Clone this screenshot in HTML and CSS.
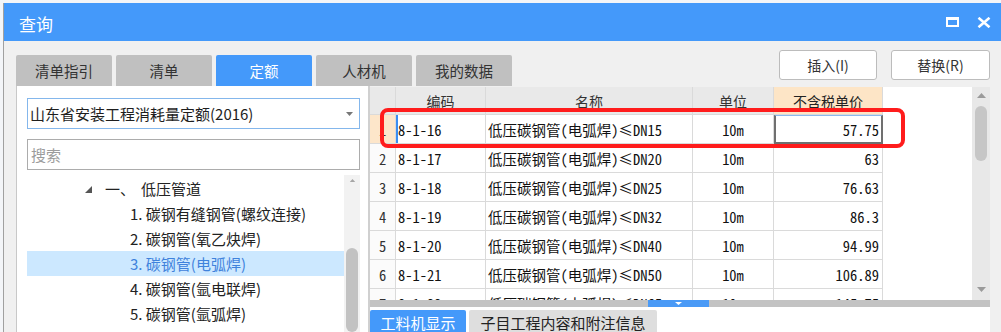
FILE: index.html
```html
<!DOCTYPE html>
<html lang="zh-CN">
<head>
<meta charset="utf-8">
<title>查询</title>
<link rel="stylesheet" href="styles.css">
</head>
<body>
<div class="dialog">
  <div class="titlebar">
    <span class="title">查询</span>
    <div class="win-ctrls">
      <svg class="ico" width="13" height="10" viewBox="0 0 13 10"><rect x="1" y="1.5" width="11" height="7.5" fill="none" stroke="#fff" stroke-width="2"/><rect x="0" y="0" width="13" height="3" fill="#fff"/></svg>
      <svg class="ico" width="14" height="11" viewBox="0 0 14 11"><path d="M1.5 0.8L12.5 10.2M12.5 0.8L1.5 10.2" stroke="#fff" stroke-width="2.6" fill="none"/></svg>
    </div>
  </div>
  <div class="dlg-body">
    <div class="toolbar">
      <div class="tabs">
        <div class="tab">清单指引</div>
        <div class="tab">清单</div>
        <div class="tab active">定额</div>
        <div class="tab">人材机</div>
        <div class="tab">我的数据</div>
      </div>
      <div class="actions">
        <button class="btn">插入(I)</button>
        <button class="btn">替换(R)</button>
      </div>
    </div>
    <div class="main">
      <div class="left">
        <div class="combo">
          <span class="combo-text">山东省安装工程消耗量定额(2016)</span>
          <svg class="combo-arrow" width="7" height="4" viewBox="0 0 7 4"><path d="M0 0H7L3.5 4Z" fill="#777"/></svg>
        </div>
        <div class="search">搜索</div>
        <div class="tree">
          <div class="tree-rows">
            <div class="node root"><svg class="twist" width="7" height="7" viewBox="0 0 7 7"><path d="M7 0V7H0Z" fill="#555"/></svg><span class="num">一、</span><span class="lbl">低压管道</span></div>
            <div class="node item">1. 碳钢有缝钢管(螺纹连接)</div>
            <div class="node item">2. 碳钢管(氧乙炔焊)</div>
            <div class="node item sel">3. 碳钢管(电弧焊)</div>
            <div class="node item">4. 碳钢管(氩电联焊)</div>
            <div class="node item">5. 碳钢管(氩弧焊)</div>
            <div class="node item">6. 碳钢伸缩器制作安装</div>
          </div>
          <div class="tree-scroll">
            <svg class="sb-up" width="9" height="5" viewBox="0 0 9 5"><path d="M0 5H9L4.5 0Z" fill="#a6a6a6"/></svg>
            <div class="tree-thumb"></div>
          </div>
        </div>
      </div>
      <div class="right">
        <div class="grid-top">
          <div class="table">
            <div class="row head">
              <div class="c rn"></div>
              <div class="c code">编码</div>
              <div class="c name">名称</div>
              <div class="c unit">单位</div>
              <div class="c price hot">不含税单价</div>
            </div>
            <div class="row">
              <div class="c rn cur">1</div>
              <div class="c code mark">8-1-16</div>
              <div class="c name">低压碳钢管(电弧焊)≤DN15</div>
              <div class="c unit">10m</div>
              <div class="c price focus">57.75</div>
            </div>
            <div class="row">
              <div class="c rn">2</div>
              <div class="c code">8-1-17</div>
              <div class="c name">低压碳钢管(电弧焊)≤DN20</div>
              <div class="c unit">10m</div>
              <div class="c price">63</div>
            </div>
            <div class="row">
              <div class="c rn">3</div>
              <div class="c code">8-1-18</div>
              <div class="c name">低压碳钢管(电弧焊)≤DN25</div>
              <div class="c unit">10m</div>
              <div class="c price">76.63</div>
            </div>
            <div class="row">
              <div class="c rn">4</div>
              <div class="c code">8-1-19</div>
              <div class="c name">低压碳钢管(电弧焊)≤DN32</div>
              <div class="c unit">10m</div>
              <div class="c price">86.3</div>
            </div>
            <div class="row">
              <div class="c rn">5</div>
              <div class="c code">8-1-20</div>
              <div class="c name">低压碳钢管(电弧焊)≤DN40</div>
              <div class="c unit">10m</div>
              <div class="c price">94.99</div>
            </div>
            <div class="row">
              <div class="c rn">6</div>
              <div class="c code">8-1-21</div>
              <div class="c name">低压碳钢管(电弧焊)≤DN50</div>
              <div class="c unit">10m</div>
              <div class="c price">106.89</div>
            </div>
            <div class="row">
              <div class="c rn">7</div>
              <div class="c code">8-1-22</div>
              <div class="c name">低压碳钢管(电弧焊)≤DN65</div>
              <div class="c unit">10m</div>
              <div class="c price">145.75</div>
            </div>
          </div>
          <div class="vscroll">
            <svg class="sb-up" width="9" height="5" viewBox="0 0 9 5"><path d="M0 5H9L4.5 0Z" fill="#9a9a9a"/></svg>
            <div class="vthumb"></div>
            <svg class="sb-down" width="9" height="5" viewBox="0 0 9 5"><path d="M0 0H9L4.5 5Z" fill="#9a9a9a"/></svg>
          </div>
        </div>
        <div class="splitter">
          <div class="split-btn"><svg width="7" height="3" viewBox="0 0 7 3"><path d="M0 0H7L3.5 3Z" fill="#fff"/></svg></div>
        </div>
        <div class="bottom">
          <div class="btab active">工料机显示</div>
          <div class="btab">子目工程内容和附注信息</div>
        </div>
        <div class="hl-box"></div>
      </div>
    </div>
  </div>
</div>
</body>
</html>
```
FILE: styles.css
```css
* { box-sizing: border-box; }
html, body { margin: 0; padding: 0; }
body {
  width: 1001px;
  height: 332px;
  overflow: hidden;
  background: #f3f5f8;
  font-family: "Noto Sans CJK SC", "Microsoft YaHei", sans-serif;
}
.dialog {
  margin: 3px 0 0 3px;
  width: 998px;
  height: 329px;
  border-left: 1px solid #a0a0a0;
  background: #f0f0f0;
  display: flex;
  flex-direction: column;
  overflow: hidden;
}
.titlebar {
  height: 38px;
  flex: none;
  background: #4499fa;
  color: #fff;
  display: flex;
  align-items: center;
  padding: 0 10px 0 15px;
}
.title { flex: 1; font-size: 17px; line-height: 20px; padding-top: 3px; }
.win-ctrls { display: flex; align-items: center; gap: 18px; }
.ico { display: block; }

.dlg-body {
  flex: 1;
  min-height: 0;
  display: flex;
  flex-direction: column;
  padding: 0 11px 0 12px;
}
.toolbar {
  height: 45px;
  flex: none;
  display: flex;
  align-items: flex-end;
  justify-content: space-between;
}
.tabs { display: flex; gap: 4px; }
.tab {
  width: 96px;
  height: 31px;
  background: #c0c0c0;
  border-radius: 2px 2px 0 0;
  color: #333;
  font-size: 14.5px;
  display: flex;
  align-items: center;
  justify-content: center;
}
.tab.active { background: #4499fa; color: #fff; }
.actions { display: flex; gap: 14px; margin-bottom: 6px; }
.btn {
  width: 98px;
  height: 30px;
  background: #fff;
  border: 1px solid #bcbcbc;
  border-radius: 3px;
  color: #333;
  font-family: inherit;
  font-size: 14px;
  padding: 0;
}
.btn + .btn { width: 99px; }

.main { flex: 1; min-height: 0; display: flex; }
.left {
  width: 354px;
  flex: none;
  background: #fff;
  border-left: 1px solid #c8c8c8;
  border-right: 2px solid #d0d0d0;
  padding: 12px 8px 0 10px;
  display: flex;
  flex-direction: column;
}
.combo {
  height: 31px;
  flex: none;
  border: 1px solid #84b7ec;
  display: flex;
  align-items: center;
  padding: 0 6px 0 2px;
  font-size: 15px;
  color: #1e1e1e;
}
.combo-text { flex: 1; }
.search {
  margin-top: 10px;
  height: 31px;
  flex: none;
  border: 1px solid #acacac;
  padding-left: 3px;
  font-size: 15px;
  line-height: 29px;
  color: #9c9c9c;
}
.tree { margin-top: 5px; flex: 1; display: flex; min-height: 0; }
.tree-rows { flex: 1; padding-top: 1px; }
.node {
  height: 25px;
  display: flex;
  align-items: center;
  font-size: 15px;
  color: #222;
  white-space: nowrap;
}
.root { padding-left: 58px; }
.twist { display: block; margin-top: 1px; }
.num { margin-left: 13px; }
.lbl { margin-left: 6px; }
.item { padding-left: 103px; }
.item.sel { background: #cce8ff; color: #3f82dc; }
.tree-scroll {
  width: 16px;
  flex: none;
  background: #f2f2f2;
  display: flex;
  flex-direction: column;
  align-items: center;
}
.tree-scroll .sb-up { display: block; margin-top: 4px; }
.tree-thumb {
  margin-top: 66px;
  width: 12px;
  height: 120px;
  border-radius: 6px;
  background: #c2c2c2;
}

.right {
  flex: 1;
  min-width: 0;
  margin-top: 1px;
  display: flex;
  flex-direction: column;
  position: relative;
}
.grid-top {
  height: 213px;
  flex: none;
  display: flex;
  background: #fff;
  overflow: hidden;
}
.table {
  flex: 1;
  overflow: hidden;
  font-family: "Noto Sans Mono CJK SC", "Liberation Mono", "Noto Sans CJK SC", monospace;
  font-size: 14.5px;
  color: #111;
}
.row { display: flex; height: 29px; }
.row.head { height: 28px; }
.c {
  flex: none;
  border-right: 1px solid #dadada;
  border-bottom: 1px solid #dadada;
  display: flex;
  align-items: center;
  white-space: nowrap;
  overflow: hidden;
}
.rn { width: 26px; justify-content: center; background: #fbfbfb; color: #333; }
.code { width: 90px; padding-left: 2px; }
.name { width: 207px; padding-left: 2px; }
.unit { width: 81px; justify-content: center; }
.price { width: 109px; justify-content: flex-end; padding-right: 3px; }
.head .c {
  background: #e9e9e9;
  justify-content: center;
  color: #333;
  padding: 0;
  font-family: "Noto Sans CJK SC", sans-serif;
  font-size: 14px;
}
.head .c.hot { background: #fde5c6; color: #222; }
.rn.cur { background: #fde6ca; }
.code.mark { box-shadow: inset 2px 0 0 #3b8ef2; }
.price.focus {
  border: 2px solid #707070;
  border-top: 1px solid #8ab9ef;
  padding-right: 2px;
}
.vscroll {
  width: 18px;
  flex: none;
  background: #e8e8e8;
  display: flex;
  flex-direction: column;
  align-items: center;
}
.vscroll .sb-up { display: block; margin-top: 6px; }
.vthumb {
  margin-top: 8px;
  width: 12px;
  height: 55px;
  border-radius: 6px;
  background: #c6c6c6;
}
.sb-down { display: block; margin-top: auto; margin-bottom: 8px; }
.splitter {
  height: 7px;
  flex: none;
  background: #c3c3c3;
  display: flex;
}
.split-btn {
  margin-left: 278px;
  width: 61px;
  background: #4a9af6;
  display: flex;
  justify-content: center;
  padding-top: 2px;
}
.split-btn svg { display: block; }
.bottom {
  flex: 1;
  background: #fff;
  padding-top: 3px;
  display: flex;
  gap: 3px;
  align-items: flex-start;
}
.btab {
  height: 30px;
  width: 188px;
  background: #dedede;
  border-radius: 2px 2px 0 0;
  font-size: 15px;
  line-height: 26px;
  text-align: center;
  color: #222;
}
.btab.active { width: 96px; background: #4499fa; color: #fff; }
.hl-box {
  position: absolute;
  left: 10px;
  top: 21px;
  width: 525px;
  height: 40px;
  border: 4px solid #ff1c1c;
  border-radius: 8px;
  pointer-events: none;
}
```
